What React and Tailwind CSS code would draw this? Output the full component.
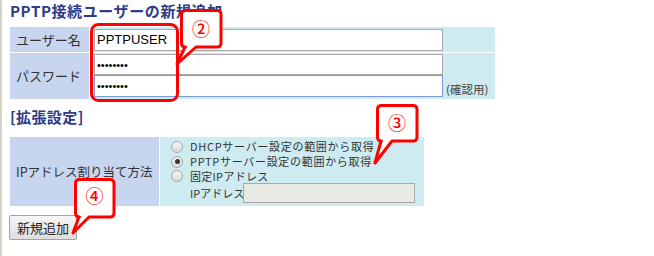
import React from "react";

const jp = { fontFamily: '"Noto Sans CJK JP", "Noto Sans", sans-serif' };

function Radio({ checked }) {
  return (
    <span className="relative flex h-[12px] w-[12px] shrink-0 items-center justify-center rounded-full border border-[#a6a6a6] bg-gradient-to-b from-[#f4f4f4] to-[#d9d9d9]">
      {checked && <span className="h-[5px] w-[5px] rounded-full bg-[#333]" />}
    </span>
  );
}

function callout(x0, x1, y0, y1, bl, br, tx, ty, r = 4) {
  return `M ${x0 + r} ${y0} H ${x1 - r} Q ${x1} ${y0} ${x1} ${y0 + r} V ${y1 - r} Q ${x1} ${y1} ${x1 - r} ${y1} H ${br} L ${tx} ${ty} L ${bl} ${y1} H ${x0 + r} Q ${x0} ${y1} ${x0} ${y1 - r} V ${y0 + r} Q ${x0} ${y0} ${x0 + r} ${y0} Z`;
}

export default function App() {
  return (
    <div
      className="relative h-[256px] w-[654px] overflow-hidden border-l-[2px] border-[#d6d2c2] bg-white pl-[8px] text-[#333]"
      style={jp}
    >
      <div className="h-[27px] pt-[1px] text-[15px] font-bold leading-[20px] tracking-[0.6px] text-[#2f3b86]">
        PPTP接続ユーザーの新規追加
      </div>

      <div className="grid w-[485px] grid-cols-[79px_405px] grid-rows-[25px_46px] gap-[1px] bg-white">
        <div className="flex items-center pl-[6px] text-[13px] leading-[16px] bg-[#c8d5ee]">ユーザー名</div>
        <div className="flex items-center pl-[4px] bg-[#cdebf1]">
          <input
            readOnly
            value="PPTPUSER"
            className="h-[22px] w-[349px] border border-[#a9a9a9] bg-white px-[2px] text-[13px] text-black outline-none"
            style={{ fontFamily: '"Liberation Sans", Arial, sans-serif' }}
          />
        </div>
        <div className="flex items-center pl-[6px] text-[13px] leading-[16px] bg-[#c8d5ee]">パスワード</div>
        <div className="flex flex-col pl-[4px] pt-[1px] bg-[#cdebf1]">
          <input
            readOnly
            type="password"
            value="password"
            className="h-[21px] w-[349px] border border-[#a9a9a9] bg-white px-[2px] text-[11px] text-black outline-none"
            style={{ fontFamily: '"Liberation Sans", Arial, sans-serif' }}
          />
          <div className="flex items-end">
            <input
              readOnly
              type="password"
              value="password"
              className="h-[22px] w-[349px] border border-[#7b9ad4] bg-white px-[2px] text-[11px] text-black outline-none"
              style={{ fontFamily: '"Liberation Sans", Arial, sans-serif' }}
            />
            <span className="ml-[3px] text-[11.5px] leading-[16px] text-[#444]">(確認用)</span>
          </div>
        </div>
      </div>

      <div className="mt-[9px] h-[29px] text-[15px] font-bold leading-[18px] tracking-[0.4px] text-[#2f3b86]">[拡張設定]</div>

      <div className="grid w-[414px] grid-cols-[149px_264px] gap-[1px] bg-white">
        <div className="flex items-center pl-[6px] text-[12.5px] leading-[16px] bg-[#c8d5ee]">IPアドレス割り当て方法</div>
        <div className="flex flex-col pl-[11px] pt-[2px] pb-[3px] text-[11px] leading-[15px] text-[#333] bg-[#cdebf1]">
          <div className="flex h-[15px] items-center">
            <Radio />
            <span className="ml-[7px] tracking-[0.7px]">DHCPサーバー設定の範囲から取得</span>
          </div>
          <div className="flex h-[15px] items-center">
            <Radio checked />
            <span className="ml-[7px] tracking-[0.7px]">PPTPサーバー設定の範囲から取得</span>
          </div>
          <div className="flex h-[14px] items-center">
            <Radio />
            <span className="ml-[7px] tracking-[0.3px]">固定IPアドレス</span>
          </div>
          <div className="flex h-[20px] items-center pl-[19px]">
            <span>IPアドレス</span>
            <span className="ml-[-1px] h-[20px] w-[172px] border border-[#a9a9a9] bg-[#e9e9e4]" />
          </div>
        </div>
      </div>

      <button className="ml-[-1px] mt-[9px] flex h-[25px] w-[68px] items-center justify-center rounded-[2px] border border-[#a3a3a3] bg-gradient-to-b from-[#f6f6f6] to-[#dedede] text-[13px] leading-[16px] text-[#222]">
        新規追加
      </button>

      <svg className="pointer-events-none absolute left-[-2px] top-0" width="654" height="256" viewBox="0 0 654 256">
        <rect x="91.5" y="24.5" width="86" height="76" rx="7" fill="none" stroke="#ff0000" strokeWidth="3" />
        <path d={callout(181.5, 221, 10.5, 47, 185, 196, 177, 64)} fill="#fff" stroke="#ff0000" strokeWidth="3" strokeLinejoin="round" />
        <path d={callout(377.5, 417, 105.5, 141, 381, 392, 375, 163)} fill="#fff" stroke="#ff0000" strokeWidth="3" strokeLinejoin="round" />
        <path d={callout(75.5, 114, 179.5, 217, 79, 89, 73, 233)} fill="#fff" stroke="#ff0000" strokeWidth="3" strokeLinejoin="round" />
        <text x="201" y="36" textAnchor="middle" fontSize="18" fontWeight="500" fill="#ff0000" style={jp}>②</text>
        <text x="397" y="130" textAnchor="middle" fontSize="18" fontWeight="500" fill="#ff0000" style={jp}>③</text>
        <text x="94.5" y="203" textAnchor="middle" fontSize="18" fontWeight="500" fill="#ff0000" style={jp}>④</text>
      </svg>
    </div>
  );
}
